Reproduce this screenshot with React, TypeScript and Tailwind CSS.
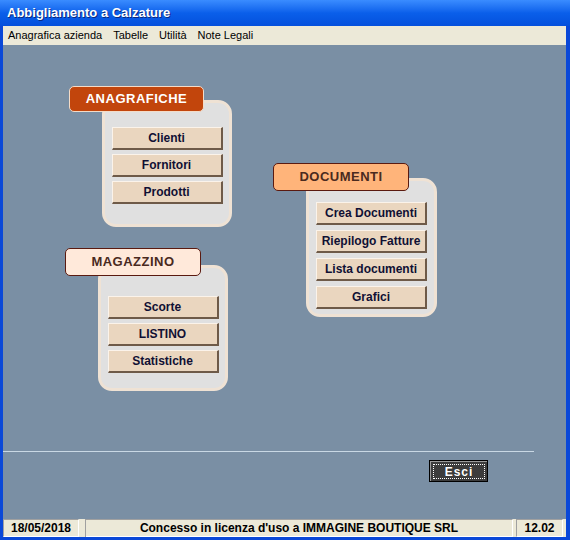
import React from "react";

const font = { fontFamily: '"Liberation Sans", Arial, sans-serif' };

function Btn({ label }: { label: string }) {
  return (
    <div className="h-[23px] w-[111px] bg-[#ead6bf] border-t border-l border-t-[#fbf3ea] border-l-[#fbf3ea] border-b-2 border-r-2 border-b-[#6e5a48] border-r-[#6e5a48] flex items-center justify-center text-[12px] font-bold text-[#101034] leading-none">
      {label}
    </div>
  );
}

export default function App() {
  return (
    <div className="w-[570px] h-[540px] bg-[#0a48d8] flex flex-col overflow-hidden" style={font}>
      {/* Title bar */}
      <div className="h-[26px] bg-gradient-to-b from-[#3a8cff] via-[#0a5fea] to-[#0550dc] flex items-center pl-[7px]">
        <span className="text-white font-bold text-[13px] [text-shadow:1px_1px_0_#0a2a80]">
          Abbigliamento a Calzature
        </span>
      </div>
      <div className="flex-1 flex flex-col ml-[3px] mr-[4px]">
        {/* Menu bar */}
        <div className="h-[19px] bg-[#ece9d8] flex items-center text-[11px] text-black pl-[5px] gap-[11px]">
          <span>Anagrafica azienda</span>
          <span>Tabelle</span>
          <span>Utilità</span>
          <span>Note Legali</span>
        </div>
        {/* Content */}
        <div className="flex-1 bg-[#7a8fa4] flex flex-col">
          <div className="h-[406px] flex pl-[62px] pt-[41px]">
            {/* Left column */}
            <div className="flex flex-col w-[167px]">
              {/* ANAGRAFICHE */}
              <div className="ml-[4px] flex flex-col">
                <div className="relative z-10 w-[135px] h-[26px] rounded-[5px] bg-[#c2450c] border border-[#f4dcc8] flex items-center justify-center text-white font-bold text-[13px] tracking-[0.5px]">
                  ANAGRAFICHE
                </div>
                <div className="ml-[33px] -mt-[12px] w-[130px] h-[127px] rounded-[14px] bg-[#e0e0e0] border-[3px] border-[#efe2d4] flex flex-col items-center pt-[24px] gap-[4px]">
                  <Btn label="Clienti" />
                  <Btn label="Fornitori" />
                  <Btn label="Prodotti" />
                </div>
              </div>
              {/* MAGAZZINO */}
              <div className="mt-[21px] flex flex-col">
                <div className="relative z-10 w-[136px] h-[28px] rounded-[5px] bg-[#ffe9da] border border-[#5a1a10] flex items-center justify-center text-[#4a2a1e] font-bold text-[13px] tracking-[0.5px]">
                  MAGAZZINO
                </div>
                <div className="ml-[33px] -mt-[11px] w-[130px] h-[126px] rounded-[14px] bg-[#e0e0e0] border-[3px] border-[#efe2d4] flex flex-col items-center pt-[28px] gap-[4px]">
                  <Btn label="Scorte" />
                  <Btn label="LISTINO" />
                  <Btn label="Statistiche" />
                </div>
              </div>
            </div>
            {/* Right column */}
            <div className="ml-[41px] mt-[77px] flex flex-col">
              <div className="relative z-10 w-[136px] h-[28px] rounded-[5px] bg-[#ffb47a] border border-[#5a1a10] flex items-center justify-center text-[#4a2a1e] font-bold text-[13px] tracking-[0.5px]">
                DOCUMENTI
              </div>
              <div className="ml-[33px] -mt-[13px] w-[131px] h-[139px] rounded-[14px] bg-[#e0e0e0] border-[3px] border-[#efe2d4] flex flex-col items-center pt-[21px] gap-[5px]">
                <Btn label="Crea Documenti" />
                <Btn label="Riepilogo Fatture" />
                <Btn label="Lista documenti" />
                <Btn label="Grafici" />
              </div>
            </div>
          </div>
          {/* Separator */}
          <div className="w-[531px] h-px bg-[#c9d8e4]" />
          {/* Esci */}
          <div className="flex justify-end pr-[78px] mt-[8px]">
            <div className="w-[59px] h-[22px] bg-black p-[1px]">
              <div className="w-full h-full bg-[#3c3c3c] border-t border-l border-[#9a9a9a] flex items-center justify-center p-[2px]">
                <div className="w-full h-full border border-dotted border-white flex items-center justify-center text-white font-bold text-[12px] tracking-[1px]">
                  Esci
                </div>
              </div>
            </div>
          </div>
        </div>
        {/* Status bar */}
        <div className="h-[18px] bg-[#ece9d8] flex items-stretch text-[12px] font-bold text-black">
          <div className="w-[76px] border-t border-l border-t-[#a0a0a0] border-l-[#a0a0a0] border-b border-r border-b-white border-r-white flex items-center justify-center">
            18/05/2018
          </div>
          <div className="w-[7px] border-r border-r-[#a0a0a0]" />
          <div className="w-[427px] border-t border-t-[#a0a0a0] border-b border-r border-b-white border-r-white flex items-center justify-center">
            Concesso in licenza d'uso a IMMAGINE BOUTIQUE SRL
          </div>
          <div className="w-[3px]" />
          <div className="w-[47px] border-t border-l border-t-[#a0a0a0] border-l-[#a0a0a0] border-b border-r border-b-white border-r-white flex items-center justify-center">
            12.02
          </div>
        </div>
      </div>
      <div className="h-[3px]" />
    </div>
  );
}
